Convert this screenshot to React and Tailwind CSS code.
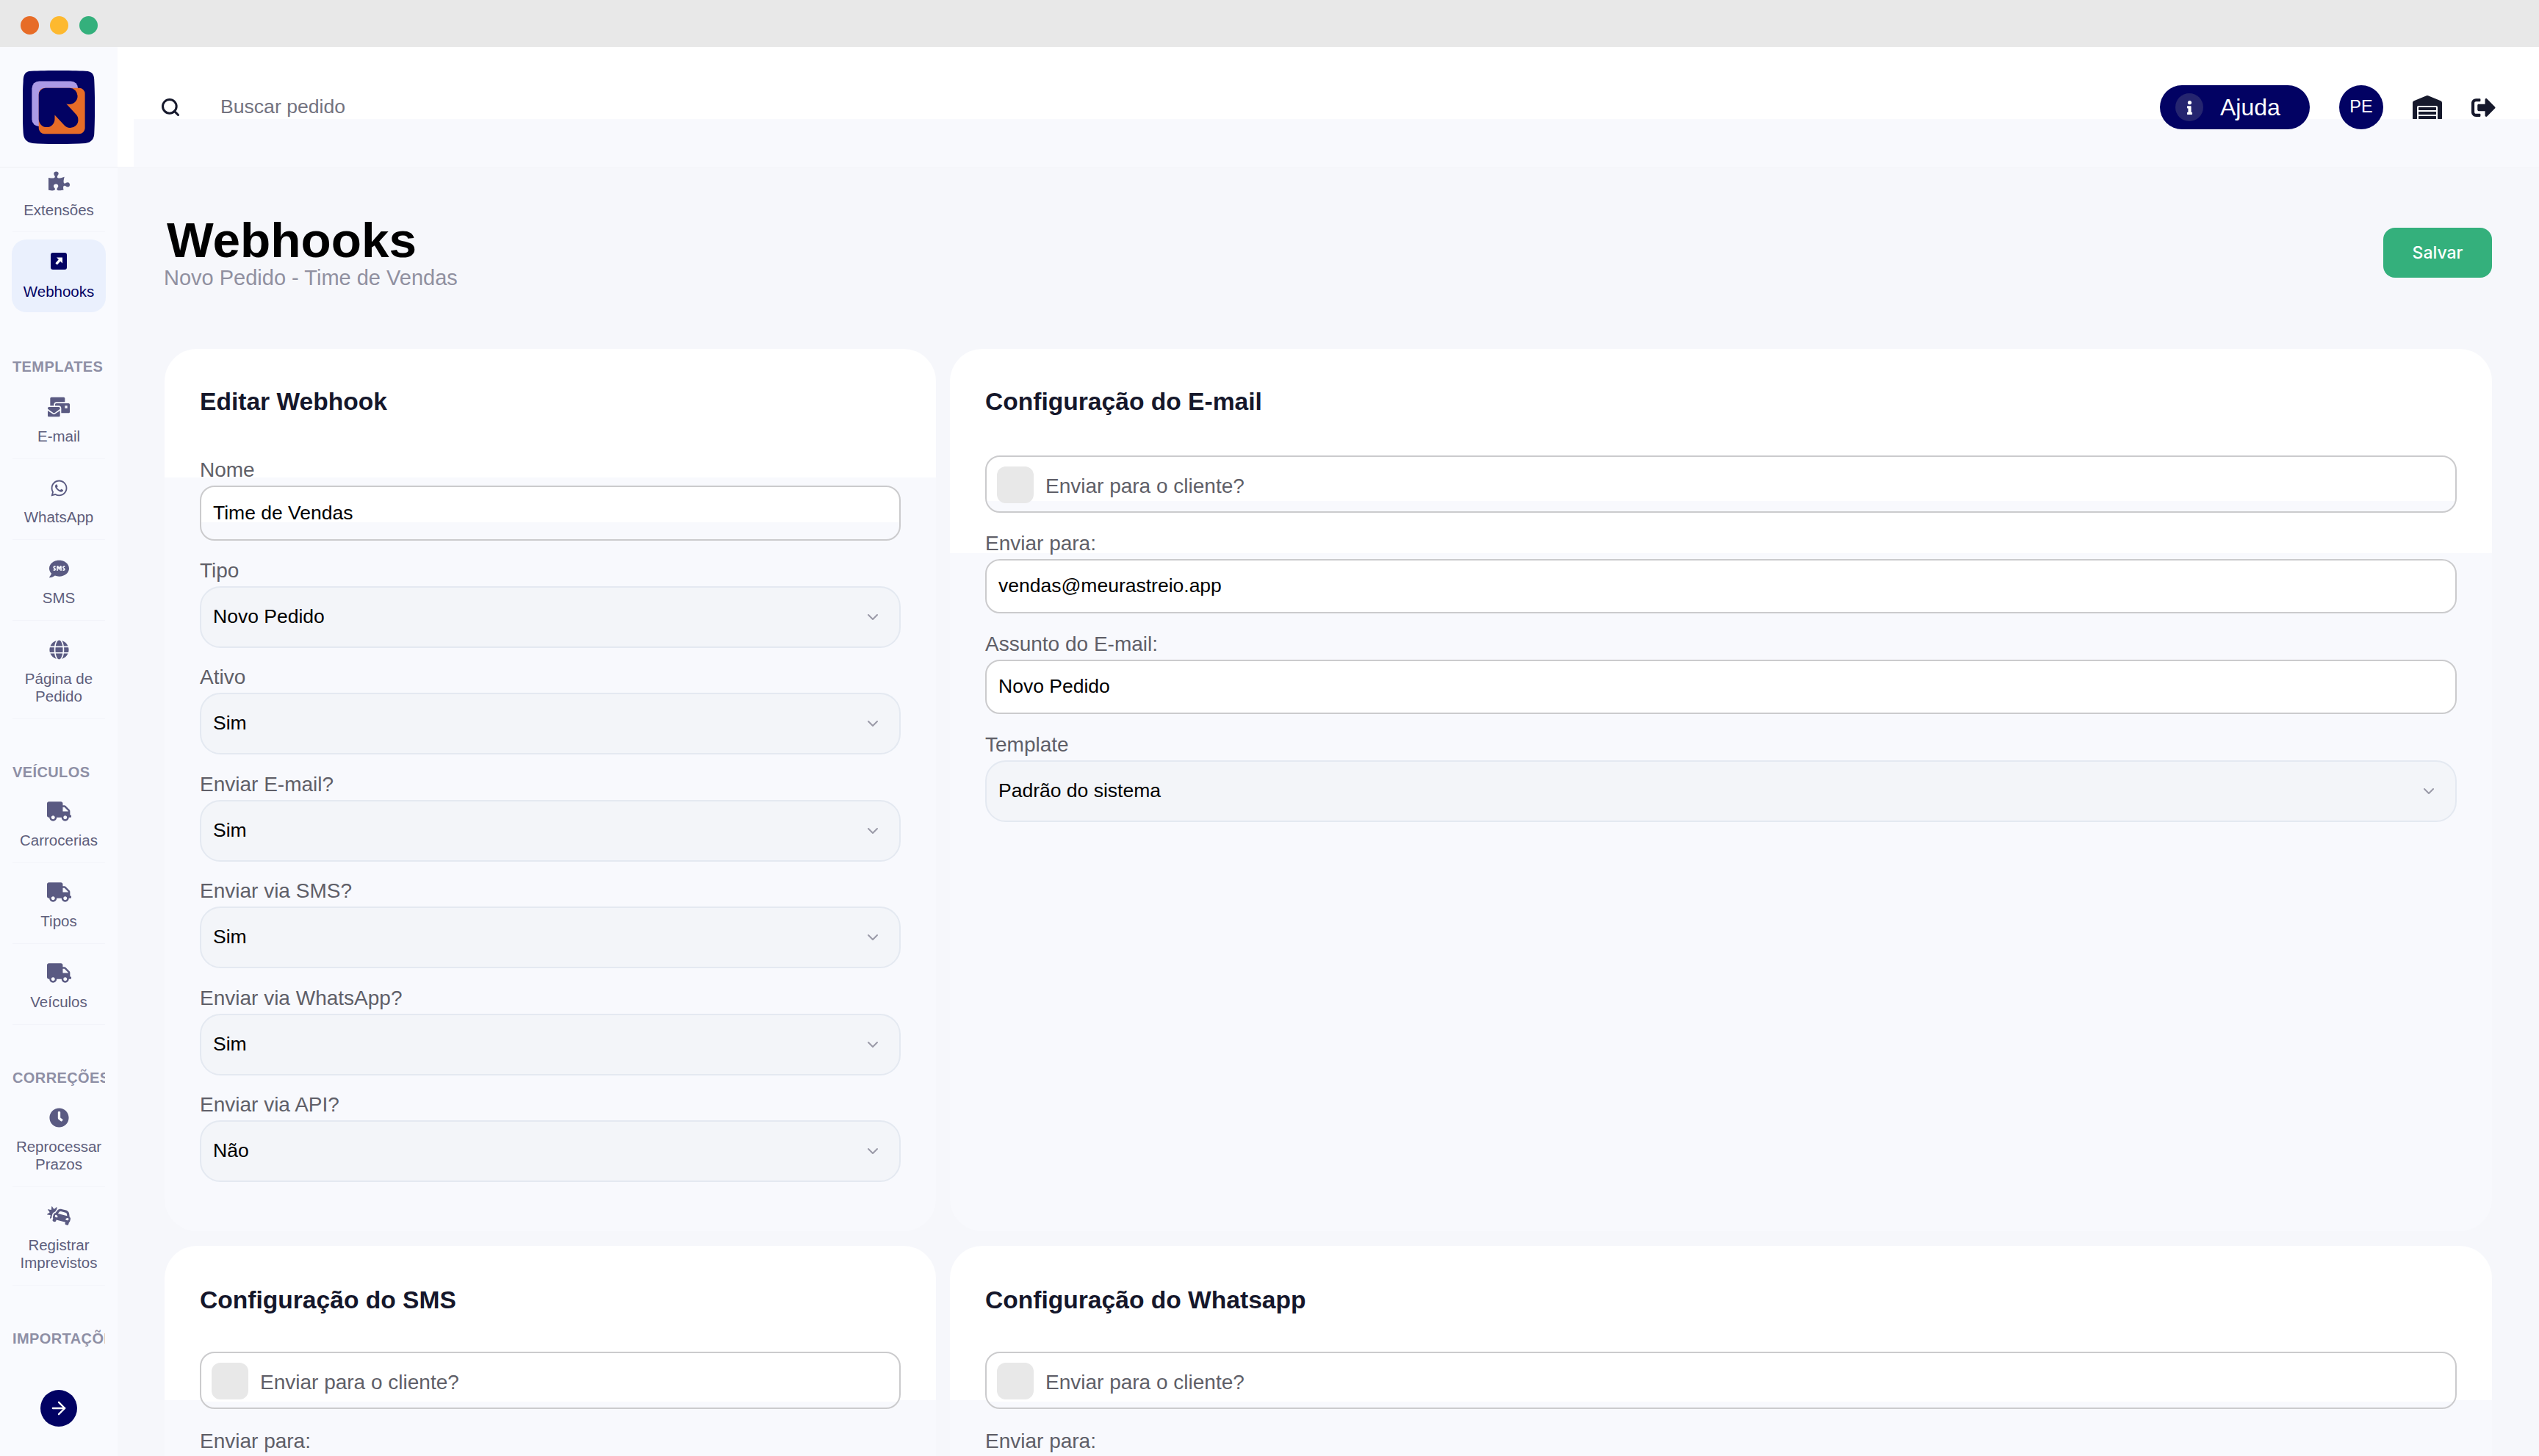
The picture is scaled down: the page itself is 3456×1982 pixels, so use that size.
import React from 'react';
import { ChevronDown, ArrowRight, Search } from 'lucide-react';
import {
  FaPuzzlePiece, FaMailBulk, FaWhatsapp, FaSms, FaGlobe, FaTruck, FaClock, FaCarCrash,
  FaWarehouse, FaSignOutAlt, FaInfo,
} from 'react-icons/fa';

const sans = 'font-["Liberation_Sans",Arial,sans-serif]';

function Logo() {
  return (
    <svg viewBox="35 48 293 297" className="w-[98px] h-[100px]">
      <path d="M60 50 C110 46 250 46 300 50 C322 54 326 70 326 90 C329 150 329 240 326 300 C326 325 315 340 290 343 C220 347 130 347 75 343 C50 340 38 325 37 300 C33 230 33 150 37 90 C37 70 42 54 60 50 Z" fill="#020263" />
      <rect x="72" y="90" width="188" height="185" rx="30" fill="#ab9ae6" />
      <rect x="100" y="118" width="188" height="187" rx="24" fill="#e76c27" />
      <path d="M128 118 H226 A33 33 0 0 1 258 150 A33 33 0 0 1 212 182 L252 226 A32 32 0 0 1 204 270 L165 228 V245 A32 32 0 0 1 100 245 V146 A28 28 0 0 1 128 118 Z" fill="#020263" />
    </svg>
  );
}

function WebhookIcon() {
  return (
    <svg viewBox="0 0 22 23" className="w-[22px] h-[23px]">
      <rect width="22" height="23" rx="3" fill="#020263" />
      <path d="M8 6.5 H16 V14.5 L13.2 11.7 L8.8 16.6 L6.4 14.2 L10.8 9.3 Z" fill="#fff" />
    </svg>
  );
}

function NavItem({ icon, label }) {
  return (
    <div className="mx-[17px] pt-6 pb-[18px] border-b border-[#f3f4fa] flex flex-col items-center text-center">
      <div className="h-[30px] flex items-center justify-center text-[#5a5a82]">{icon}</div>
      <div className="mt-[13px] text-[20.5px] leading-6 text-[#5e5e7c]">
        {label.map((l) => <div key={l}>{l}</div>)}
      </div>
    </div>
  );
}

function SectionTitle({ children, className }) {
  return (
    <div className={`mx-[17px] h-6 leading-6 overflow-hidden whitespace-nowrap text-[20px] font-bold tracking-[0.4px] text-[#8e8fa5] ${className}`}>
      {children}
    </div>
  );
}

function Sidebar() {
  return (
    <aside className="w-[160px] shrink-0 flex flex-col bg-[#f9fafe] overflow-hidden">
      <div className="h-[164px] shrink-0 pt-8 flex justify-center border-b border-[#eeeff3]">
        <Logo />
      </div>
      <nav className="flex-1 overflow-hidden">
        <div className="mx-[17px] h-[88px] pt-[3px] pb-[17px] border-b border-[#f3f4fa] flex flex-col items-center">
          <div className="h-[30px] flex items-center text-[#5a5a82]"><FaPuzzlePiece size={29} /></div>
          <div className="mt-[13px] text-[20.5px] leading-6 text-[#5e5e7c]">Extensões</div>
        </div>
        <div className="mx-4 mt-[10px] h-[99px] rounded-[20px] bg-[#eaf0fd] flex flex-col items-center pt-[14px]">
          <div className="h-[30px] flex items-center"><WebhookIcon /></div>
          <div className="mt-[15px] text-[20.5px] leading-6 text-[#020263]">Webhooks</div>
        </div>

        <SectionTitle className="mt-[62px] mb-[4px]">TEMPLATES</SectionTitle>
        <NavItem icon={<FaMailBulk size={30} />} label={['E-mail']} />
        <NavItem icon={<FaWhatsapp size={25} />} label={['WhatsApp']} />
        <NavItem icon={<FaSms size={27} />} label={['SMS']} />
        <NavItem icon={<FaGlobe size={27} />} label={['Página de', 'Pedido']} />

        <SectionTitle className="mt-[60px] mb-[2px]">VEÍCULOS</SectionTitle>
        <NavItem icon={<FaTruck size={33} />} label={['Carrocerias']} />
        <NavItem icon={<FaTruck size={33} />} label={['Tipos']} />
        <NavItem icon={<FaTruck size={33} />} label={['Veículos']} />

        <SectionTitle className="mt-[60px] mb-[3px]">CORREÇÕES</SectionTitle>
        <NavItem icon={<FaClock size={27} />} label={['Reprocessar', 'Prazos']} />
        <NavItem icon={<FaCarCrash size={32} />} label={['Registrar', 'Imprevistos']} />

        <SectionTitle className="mt-[60px]">IMPORTAÇÕES</SectionTitle>
        <div className="mt-[58px] mx-auto size-[50px] rounded-full bg-[#020263] flex items-center justify-center text-white">
          <ArrowRight size={28} strokeWidth={2} />
        </div>
      </nav>
    </aside>
  );
}

function Header() {
  return (
    <header className="h-[164px] shrink-0 flex items-start justify-between pl-[60px] pr-[59px] pt-[52px] bg-[linear-gradient(90deg,#fff_22px,transparent_22px),linear-gradient(#fff_98px,#f8f9fd_98px)] border-b border-[#f4f5f9]">
      <div className="h-[60px] flex items-center">
        <Search size={28} strokeWidth={2.6} className="text-[#16192c] -ml-[2px]" />
        <span className="ml-[54px] text-[26.6px] text-[#73737f]">Buscar pedido</span>
      </div>
      <div className="flex items-center h-[60px]">
        <div className="h-[60px] w-[204px] rounded-full bg-[#020263] flex items-center pl-[21px] text-white">
          <span className="size-[38px] rounded-full bg-[#25256f] flex items-center justify-center"><FaInfo size={19} /></span>
          <span className="ml-[23px] text-[32px]">Ajuda</span>
        </div>
        <div className="ml-10 size-[60px] rounded-full bg-[#020263] flex items-center justify-center text-white text-[23.5px]">PE</div>
        <FaWarehouse size={40} className="ml-10 text-[#16192c]" />
        <FaSignOutAlt size={33} className="ml-[40px] text-[#16192c]" />
      </div>
    </header>
  );
}

function Label({ className, children }) {
  return <div className={`h-10 leading-10 text-[28px] text-[#5f5f68] ${className}`}>{children}</div>;
}

function Select({ value }) {
  return (
    <div className="mt-px h-[84px] rounded-[28px] border-2 border-[#e4e9f1] bg-[#f3f5f9] flex items-center justify-between pl-4 pr-[24px]">
      <span className="text-[26.5px] text-black">{value}</span>
      <ChevronDown size={24} strokeWidth={2} className="text-[#9a9aa8]" />
    </div>
  );
}

function Input({ value, className }) {
  return (
    <div className={`mt-px rounded-[20px] border-2 border-[#cbcbcd] flex items-center pl-4 text-[26.5px] text-black ${className}`}>
      {value}
    </div>
  );
}

function ClientCheck({ className }) {
  return (
    <div className={`h-[78px] rounded-[20px] border-2 border-[#cbcbcd] flex items-center pl-[14px] pt-[2px] ${className}`}>
      <span className="size-[50px] rounded-[12px] bg-[#e8e8e8]" />
      <span className="ml-4 mt-[3px] text-[28px] text-[#5f5f68]">Enviar para o cliente?</span>
    </div>
  );
}

function CardTitle({ className, children }) {
  return <h2 className={`h-11 leading-[44px] text-[33.6px] font-bold text-[#15172b] ${className}`}>{children}</h2>;
}

function EditCard() {
  const selects = [
    ['Tipo', 'Novo Pedido'],
    ['Ativo', 'Sim'],
    ['Enviar E-mail?', 'Sim'],
    ['Enviar via SMS?', 'Sim'],
    ['Enviar via WhatsApp?', 'Sim'],
    ['Enviar via API?', 'Não'],
  ];
  return (
    <section className="rounded-[44px] px-12 pt-[50px] pb-[67px] bg-[linear-gradient(#fff_175px,#f8f9fd_175px)]">
      <CardTitle className="mb-[51px]">Editar Webhook</CardTitle>
      <Label>Nome</Label>
      <Input value="Time de Vendas" className="h-[75px] bg-[linear-gradient(#fff_48px,#f8f9fd_48px)]" />
      {selects.map(([label, value]) => (
        <div key={label}>
          <Label className="mt-[20.5px]">{label}</Label>
          <Select value={value} />
        </div>
      ))}
    </section>
  );
}

function EmailCard() {
  return (
    <section className="rounded-[44px] px-12 pt-[50px] bg-[linear-gradient(#fff_278px,#f8f9fd_278px)]">
      <CardTitle className="mb-[51px]">Configuração do E-mail</CardTitle>
      <ClientCheck className="bg-[linear-gradient(#fff_60px,#f8f9fd_60px)]" />
      <Label className="mt-[22px]">Enviar para:</Label>
      <Input value="vendas@meurastreio.app" className="h-[74px] bg-white" />
      <Label className="mt-[22px]">Assunto do E-mail:</Label>
      <Input value="Novo Pedido" className="h-[74px] bg-white" />
      <Label className="mt-[22px]">Template</Label>
      <Select value="Padrão do sistema" />
    </section>
  );
}

function MessageCard({ title }) {
  return (
    <section className="rounded-t-[44px] px-12 pt-[52px] pb-12 bg-[linear-gradient(#fff_210px,#f8f9fd_210px)]">
      <CardTitle className="mb-12">{title}</CardTitle>
      <ClientCheck className="bg-[linear-gradient(#fff_66px,#f8f9fd_66px)]" />
      <Label className="mt-[24px] mb-[3px]">Enviar para:</Label>
      <Input value="" className="h-[74px] bg-white" />
    </section>
  );
}

export default function App() {
  return (
    <div className={`h-screen overflow-hidden flex flex-col bg-[#f6f7fb] ${sans}`}>
      <div className="h-16 shrink-0 bg-[#e8e8e8] flex items-center gap-[15px] pl-[28px] pt-[4px]">
        <span className="size-[25px] rounded-full bg-[#e76c27]" />
        <span className="size-[25px] rounded-full bg-[#fdb92f]" />
        <span className="size-[25px] rounded-full bg-[#34b07c]" />
      </div>
      <div className="flex-1 flex min-h-0">
        <Sidebar />
        <div className="flex-1 min-w-0 flex flex-col">
          <Header />
          <main className="flex-1 min-h-0 overflow-hidden pl-16 pr-16 bg-[#f6f7fb]">
            <div className="h-[247px] pt-[66px] flex items-start justify-between">
              <div>
                <h1 className="text-[67.5px] leading-[66px] font-bold text-black pl-[3px]">Webhooks</h1>
                <p className="text-[29px] leading-[36px] -ml-px text-[#9090a0]">Novo Pedido - Time de Vendas</p>
              </div>
              <button className="mt-[16px] w-[148px] h-[68px] rounded-[16px] bg-[#34b07c] text-white text-[23px] font-['Inter'] font-medium">Salvar</button>
            </div>
            <div className="grid grid-cols-[1050px_1fr] gap-x-[19px] gap-y-5">
              <EditCard />
              <EmailCard />
              <MessageCard title="Configuração do SMS" />
              <MessageCard title="Configuração do Whatsapp" />
            </div>
          </main>
        </div>
      </div>
    </div>
  );
}
